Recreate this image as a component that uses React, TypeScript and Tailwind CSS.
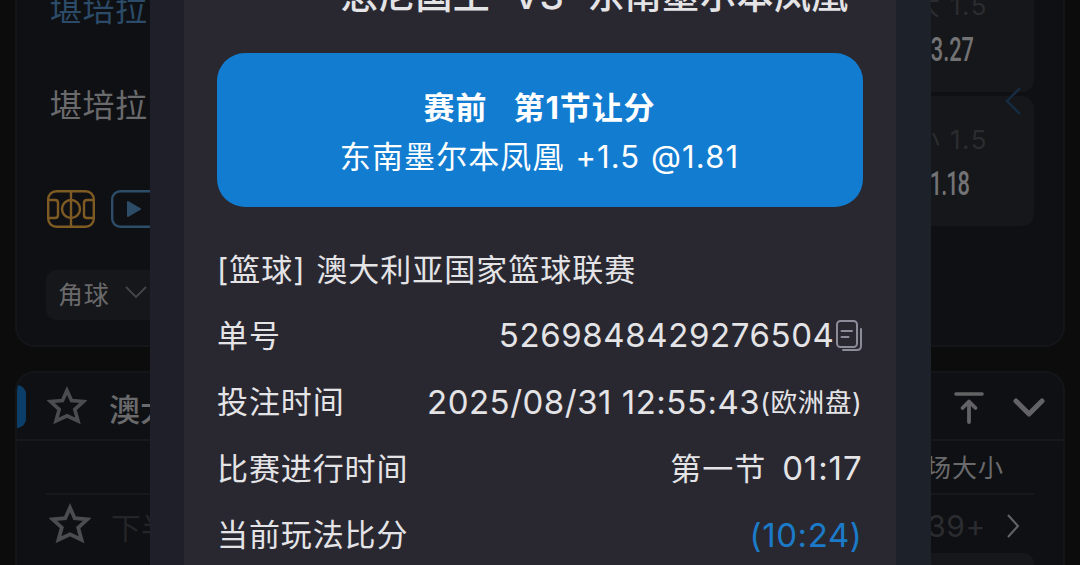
import { ReactNode } from "react";

const StarIcon = ({ className }: { className: string }) => (
  <svg viewBox="0 0 40 40" className={className} fill="none" stroke="currentColor" strokeWidth="3.6">
    <path d="M20 4.5 L24.5 14.5 L36.5 15.5 L27.8 23.4 L31 35 L20 29.8 L9 35 L12.2 23.4 L3.5 15.5 L15.5 14.5 Z" />
  </svg>
);

const CourtIcon = () => (
  <svg width="48" height="38" viewBox="0 0 48 38" fill="none" stroke="#7f5b24" strokeWidth="2.4">
    <rect x="1.2" y="1.2" width="45.6" height="35.6" rx="8" />
    <path d="M24 1V37M1 10H8Q11 10 11 13V25Q11 28 8 28H1M47 10H40Q37 10 37 13V25Q37 28 40 28H47" />
    <circle cx="24" cy="19" r="9" />
  </svg>
);

const VideoIcon = () => (
  <svg width="48" height="38" viewBox="0 0 48 38" fill="none">
    <rect x="1.2" y="1.2" width="45.6" height="35.6" rx="8" stroke="#2d4c68" strokeWidth="2.4" />
    <path d="M17 12L29 19L17 26Z" fill="#2d4c68" stroke="#2d4c68" strokeWidth="2" strokeLinejoin="round" />
  </svg>
);

const CopyIcon = () => (
  <svg width="28" height="34" viewBox="0 0 28 34" fill="none" stroke="#8c8b98" strokeWidth="2" strokeLinecap="round">
    <rect x="2" y="2" width="20" height="26" rx="3.5" />
    <path d="M6.5 12H17M6.5 18H13.5M26 10V27Q26 31 22 31H8" />
  </svg>
);

const TopIcon = () => (
  <svg width="30" height="34" viewBox="0 0 30 34" fill="none" stroke="#636366" strokeLinecap="round" strokeLinejoin="round">
    <path d="M2 3H28" strokeWidth="3.6" />
    <path d="M15 31V11M8.5 17L15 10.5L21.5 17" strokeWidth="3.8" />
  </svg>
);

const Odds = ({ label, value, className }: { label: string; value: string; className: string }) => (
  <div className="h-[130px] w-[150px] shrink-0 rounded-[12px] bg-[#16171a] pr-[46px] text-right">
    <p className="mt-[29px] h-[43px] text-[26px] leading-[30px] tracking-[1.5px] text-[#2b2c2f]">{label}</p>
    <p className={className}>{value}</p>
  </div>
);

const Row = ({ label, children }: { label: string; children?: ReactNode }) => (
  <div className="flex h-[66.4px] items-center justify-between whitespace-nowrap">
    <span className="text-[31px] tracking-[0.9px]">{label}</span>
    <div className="flex items-center">{children}</div>
  </div>
);

const Matches = () => (
  <div className="flex w-full flex-col px-[15px]">
    <div className="flex h-[347px] shrink-0 justify-between rounded-b-[20px] border-2 border-t-0 border-[#141518] bg-[#0f1013] pl-[29px] pr-[29px]">
      <div className="flex flex-col">
        <p className="mt-[-12px] ml-1 h-[96px] text-[32px] leading-[44px] tracking-[0.5px] text-[#2b4b68]">堪培拉</p>
        <p className="ml-1 h-[106px] text-[32px] leading-[44px] tracking-[0.5px] text-[#6a6a6c]">堪培拉</p>
        <div className="ml-px flex gap-[16px]">
          <CourtIcon />
          <VideoIcon />
        </div>
        <div className="mt-[42px] flex h-[50px] w-[150px] items-center rounded-[10px] bg-[#16171a] pt-[2px] pl-[12px] text-[25px] tracking-[0.8px] text-[#6a6a6c]">
          角球
          <svg width="24" height="14" viewBox="0 0 24 14" className="-mt-2 ml-[14px]" fill="none" stroke="#45464a" strokeWidth="1.8">
            <path d="M2 2L12 12L22 2" />
          </svg>
        </div>
      </div>
      <div className="mt-[-38px] flex flex-col gap-[4px]">
        <Odds label="大 1.5" value="3.27" className="mr-[14px] origin-right scale-x-[0.66] text-[33px] leading-[32px] font-medium text-[#737375] font-[Roboto]" />
        <Odds label="小 1.5" value="1.18" className="mr-[19px] origin-right scale-x-[0.66] text-[33px] leading-[32px] font-medium tracking-[-1.5px] text-[#737375] font-[Roboto]" />
      </div>
    </div>

    <div className="mt-[24px] h-[220px] shrink-0 overflow-hidden rounded-t-[20px] border-2 border-[#141518] bg-[#0f1013]">
      <div className="flex h-[68px] items-center justify-between border-b-2 border-[#17181c] pr-[17px]">
        <div className="flex items-center">
          <span className="h-[43px] w-[9px] rounded-r-[9px] bg-[#0b3f6a]" />
          <StarIcon className="ml-[21px] size-[40px] text-[#4b4c4f]" />
          <span className="mt-2 ml-[22px] text-[31px] font-medium text-[#6a6a6c]">澳大</span>
        </div>
        <div className="flex items-center gap-[28px] pt-[3px]">
          <TopIcon />
          <svg width="34" height="20" viewBox="0 0 34 20" fill="none" stroke="#636366" strokeWidth="5" strokeLinecap="round" strokeLinejoin="round">
            <path d="M4 3L17 16L30 3" />
          </svg>
        </div>
      </div>
      <div className="mx-[29px] flex h-[54px] items-center justify-end border-b-2 border-[#17181c] pt-[3px] pr-[30px] text-[25px] tracking-[1px] text-[#6a6a6c]">
        场大小
      </div>
      <div className="mx-[29px] flex h-[58px] items-center justify-between">
        <div className="flex items-center">
          <StarIcon className="ml-[3px] size-[42px] text-[#4b4c4f]" />
          <span className="mt-2 ml-[20px] text-[30px] text-[#242528]">下半</span>
        </div>
        <div className="flex items-center pt-[4px] pr-[14px] text-[30px] tracking-[0.6px] text-[#2b2c2f]">
          39+
          <svg width="14" height="26" viewBox="0 0 14 26" className="ml-[20px]" fill="none" stroke="#646467" strokeWidth="2">
            <path d="M2 2L12 13L2 24" />
          </svg>
        </div>
      </div>
      <div className="mx-[29px] flex justify-end">
        <div className="h-[40px] w-[150px] rounded-[10px] bg-[#16171a]" />
      </div>
    </div>
  </div>
);

const BetDetail = () => (
  <div className="absolute inset-y-0 left-[150px] w-[780.5px] bg-gradient-to-r from-[#1f1f2a] to-[#1d212a] pr-[34.5px] pl-[34px]">
    <div className="h-full bg-[#292831] pr-[33.5px] pl-[32.5px] text-[#e4e4e7]">
      <div className="flex h-[53px] justify-end pr-[14px] whitespace-pre">
        <h1 className="-mt-[29px] text-[37px] leading-[50px] font-medium tracking-[0.3px] [word-spacing:1.5px]">悉尼国王  VS  东南墨尔本凤凰</h1>
      </div>
      <div className="flex h-[154px] flex-col items-center rounded-[28px] bg-[#127cd0] pt-[31.5px] whitespace-pre text-white">
        <p className="h-[49px] text-[31px] leading-[46px] font-bold tracking-[0.9px] [word-spacing:0.5px]">赛前   第1节让分</p>
        <p className="text-[31px] leading-[46px] tracking-[1.1px] [word-spacing:1px]">东南墨尔本凤凰 +1.5 @1.81</p>
      </div>
      <div className="mt-[30px] pl-[0.5px]">
        <div className="flex h-[66px] items-center whitespace-nowrap">
          <span className="text-[31px] tracking-[1px] [word-spacing:1px]">[篮球] 澳大利亚国家篮球联赛</span>
        </div>
        <Row label="单号">
          <span className="text-[33px] tracking-[0.6px]">5269848429276504</span>
          <CopyIcon />
        </Row>
        <Row label="投注时间">
          <span className="text-[33px] tracking-[0.5px]">2025/08/31 12:55:43</span>
          <span className="text-[26.5px] tracking-[0.7px]">(欧洲盘)</span>
        </Row>
        <Row label="比赛进行时间">
          <span className="mr-[16px] text-[31px] tracking-[1px]">第一节</span>
          <span className="text-[33px] tracking-[0.9px]">01:17</span>
        </Row>
        <Row label="当前玩法比分">
          <span className="text-[33px] tracking-[0.6px] text-[#1b7bc8]">(10:24)</span>
        </Row>
      </div>
    </div>
  </div>
);

const App = () => {
  return (
    <div className="relative flex h-[565px] w-[1080px] overflow-hidden bg-[#0c0c0d] font-['Inter','Noto_Sans_CJK_SC',sans-serif]">
      <Matches />
      <svg width="24" height="32" viewBox="0 0 24 32" className="absolute top-[85px] left-[1004px]" fill="none" stroke="#172c42" strokeWidth="2.4">
        <path d="M16 3L3 16L16 29" />
      </svg>
      <BetDetail />
    </div>
  );
};

export default App;
